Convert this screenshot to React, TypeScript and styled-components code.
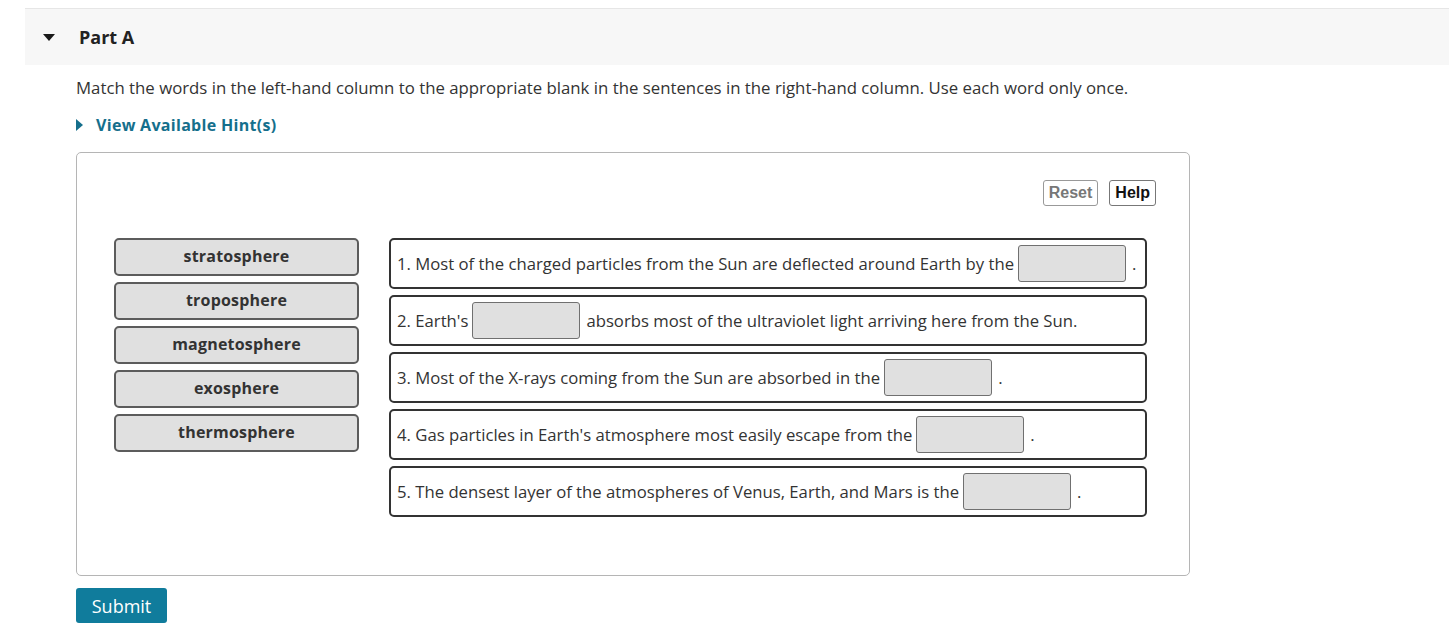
import React from "react";
import styled, { createGlobalStyle } from "styled-components";

const Global = createGlobalStyle`
  html, body { margin: 0; padding: 0; background: #fff; }
  body { font-family: "Open Sans", "Noto Sans", sans-serif; color: #333; }
`;

const Page = styled.div`
  padding-top: 8px;
`;

const Section = styled.section`
  margin-left: 25px;
  border-top: 1px solid #e6e6e6;
`;

const Header = styled.div`
  height: 56px;
  background: #f7f7f7;
  display: flex;
  align-items: center;
  padding-left: 18px;
  gap: 24px;
`;

const Caret = styled.span`
  width: 0;
  height: 0;
  border-left: 6.5px solid transparent;
  border-right: 6.5px solid transparent;
  border-top: 7px solid #1a1a1a;
`;

const Title = styled.h2`
  margin: 0;
  font-size: 18px;
  font-weight: 700;
  color: #222;
`;

const Body = styled.div`
  padding-left: 51px;
  padding-top: 12px;
`;

const Instructions = styled.p`
  margin: 0;
  font-size: 16.8px;
  line-height: 22px;
  color: #333;
`;

const Hint = styled.div`
  margin-top: 15px;
  display: flex;
  align-items: center;
  gap: 13px;
  color: #156f8c;
  font-weight: 700;
  font-size: 16px;
  letter-spacing: 0.3px;
  line-height: 22px;
`;

const HintCaret = styled.span`
  width: 0;
  height: 0;
  border-top: 6px solid transparent;
  border-bottom: 6px solid transparent;
  border-left: 7px solid #156f8c;
`;

const Box = styled.div`
  margin-top: 16px;
  width: 1112px;
  height: 422px;
  border: 1px solid #b5b5b5;
  border-radius: 5px;
  display: flex;
  flex-direction: column;
`;

const Toolbar = styled.div`
  display: flex;
  justify-content: flex-end;
  gap: 11px;
  padding: 27px 33px 0 0;
`;

const ToolButton = styled.button<{ $muted?: boolean }>`
  height: 26px;
  padding: 0 5px;
  background: #fff;
  border: 1px solid ${(p) => (p.$muted ? "#999" : "#777")};
  border-radius: 3px;
  font-family: "Liberation Sans", Arial, sans-serif;
  font-weight: 700;
  font-size: 16px;
  color: ${(p) => (p.$muted ? "#777" : "#111")};
  cursor: pointer;
`;

const Work = styled.div`
  display: flex;
  gap: 30px;
  padding: 32px 0 0 37px;
`;

const Words = styled.div`
  display: flex;
  flex-direction: column;
  gap: 6px;
`;

const Tile = styled.div`
  box-sizing: border-box;
  width: 245px;
  height: 38px;
  background: #e0e0e0;
  border: 2px solid #5c5c5c;
  border-radius: 5px;
  display: flex;
  align-items: center;
  justify-content: center;
  font-weight: 700;
  font-size: 16px;
  letter-spacing: 0.2px;
  color: #333;
  padding-bottom: 2px;
`;

const Sentences = styled.div`
  display: flex;
  flex-direction: column;
  gap: 6px;
`;

const Row = styled.div`
  box-sizing: border-box;
  width: 758px;
  height: 51px;
  border: 2px solid #333;
  border-radius: 5px;
  display: flex;
  align-items: center;
  padding-left: 6px;
  font-size: 16.7px;
  color: #333;
  white-space: pre;
`;

const Blank = styled.span`
  box-sizing: border-box;
  display: inline-block;
  width: 108px;
  height: 37px;
  margin: 0 6px 0 4px;
  background: #e0e0e0;
  border: 1.5px solid #707070;
  border-radius: 3px;
`;

const Submit = styled.button`
  margin-top: 12px;
  height: 35px;
  width: 91px;
  background: #107c9c;
  color: #fff;
  border: none;
  border-radius: 3px;
  font-family: "Open Sans", "Noto Sans", sans-serif;
  font-size: 18px;
  cursor: pointer;
`;

const words = ["stratosphere", "troposphere", "magnetosphere", "exosphere", "thermosphere"];

const sentences: [string, string][] = [
  ["1. Most of the charged particles from the Sun are deflected around Earth by the", "."],
  ["2. Earth's", "absorbs most of the ultraviolet light arriving here from the Sun."],
  ["3. Most of the X-rays coming from the Sun are absorbed in the", "."],
  ["4. Gas particles in Earth's atmosphere most easily escape from the", "."],
  ["5. The densest layer of the atmospheres of Venus, Earth, and Mars is the", "."],
];

export default function App() {
  return (
    <Page>
      <Global />
      <Section>
        <Header>
          <Caret />
          <Title>Part A</Title>
        </Header>
        <Body>
          <Instructions>
            Match the words in the left-hand column to the appropriate blank in the sentences in the right-hand column. Use each word only once.
          </Instructions>
          <Hint>
            <HintCaret />
            View Available Hint(s)
          </Hint>
          <Box>
            <Toolbar>
              <ToolButton $muted>Reset</ToolButton>
              <ToolButton>Help</ToolButton>
            </Toolbar>
            <Work>
              <Words>
                {words.map((w) => (
                  <Tile key={w}>{w}</Tile>
                ))}
              </Words>
              <Sentences>
                {sentences.map(([a, b]) => (
                  <Row key={a}>
                    <span>{a}</span>
                    <Blank />
                    <span>{b}</span>
                  </Row>
                ))}
              </Sentences>
            </Work>
          </Box>
          <Submit>Submit</Submit>
        </Body>
      </Section>
    </Page>
  );
}
